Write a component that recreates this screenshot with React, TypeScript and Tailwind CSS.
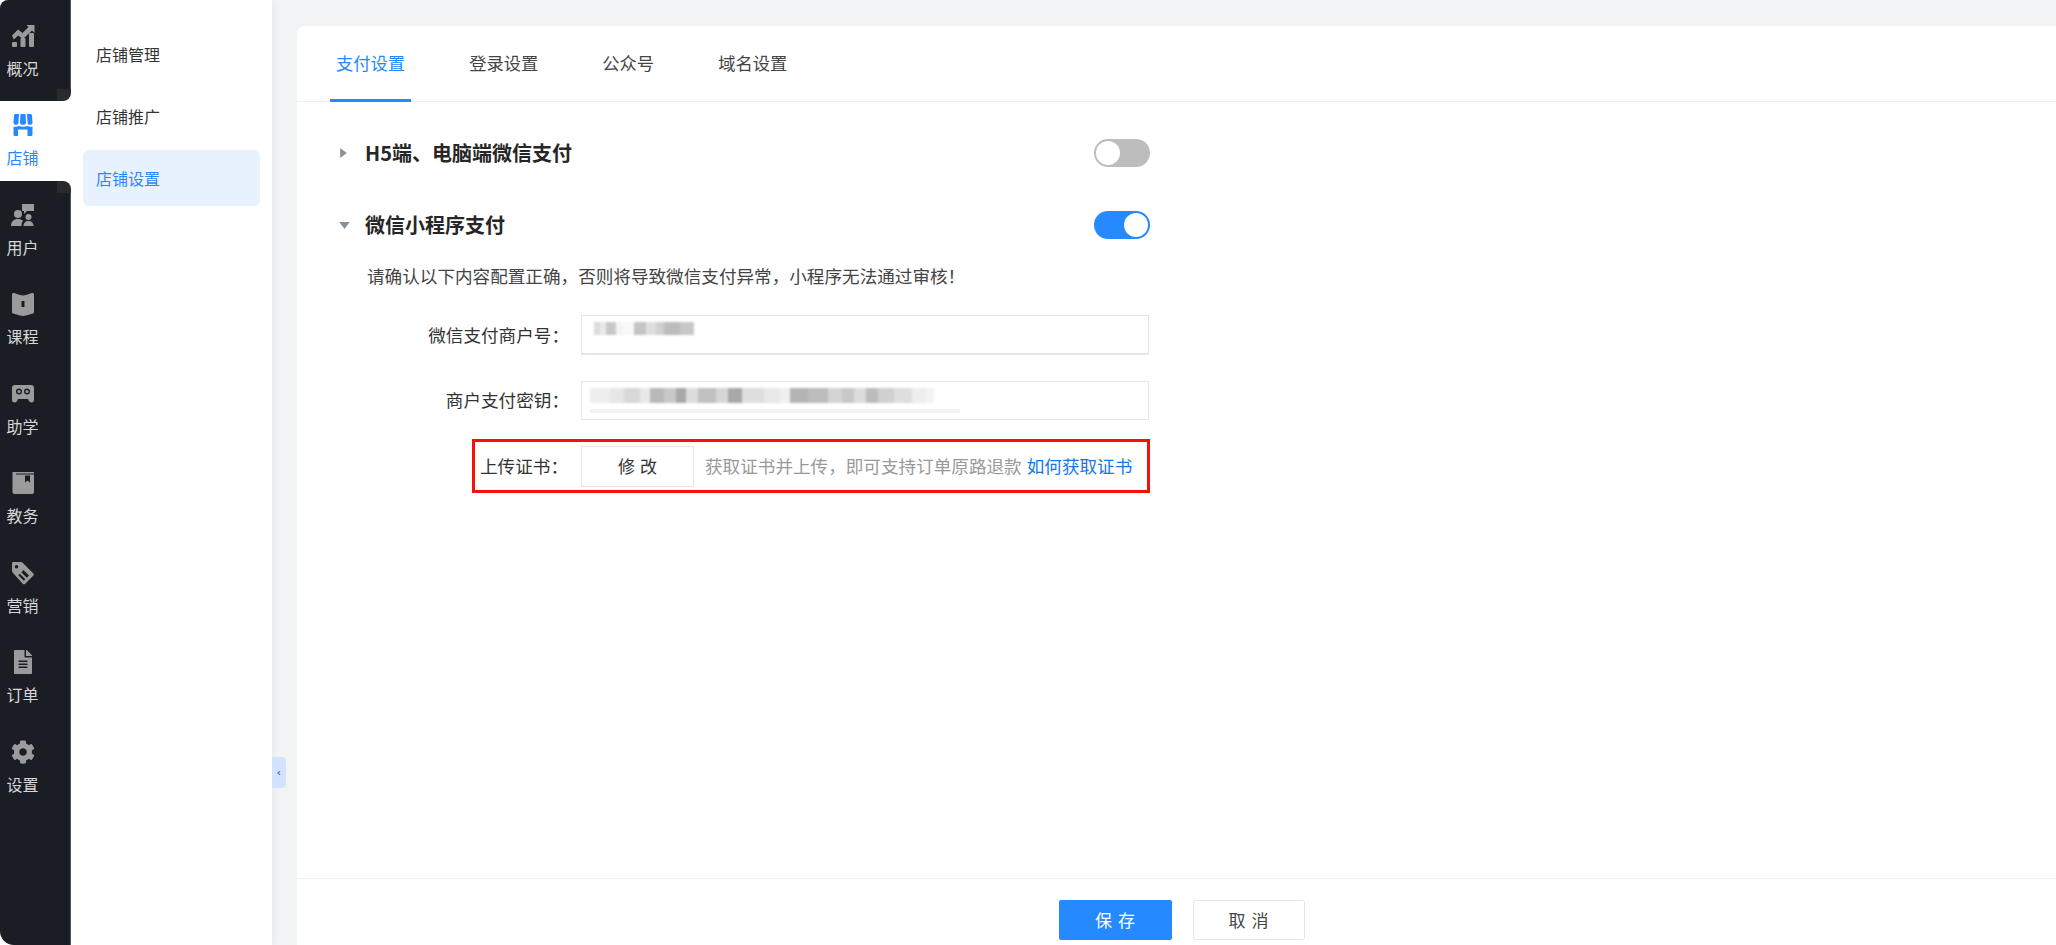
import React from 'react';
import { FaCog, FaFileAlt } from 'react-icons/fa';

const ChartIcon = () => (
  <svg viewBox="0 0 24 24" className="w-6 h-6 fill-current">
    <rect x="1" y="18" width="5" height="5" rx="1" />
    <rect x="9.5" y="14" width="5" height="9" rx="1" />
    <rect x="18" y="9" width="5" height="14" rx="1" />
    <path d="M1 11.500l6-6 4.500 3.500L17.500 3l-2-2H23.500v8l-2.500-2.500-9 8.500L7.200 11.500 2.800 15.500z" />
  </svg>
);

const StoreIcon = () => (
  <svg viewBox="0 0 24 24" className="w-6 h-6 fill-current">
    <path d="M4.500 1h3.500L7.500 9.500c0 1.400-1 2.300-2.500 2.300S2.500 10.900 2.500 9.500L3 2.500C3.100 1.600 3.700 1 4.500 1z" />
    <path d="M9.500 1h5L15 9.500c0 1.400-1.300 2.300-3 2.300S9 10.900 9 9.500z" />
    <path d="M16 1h3.500c.8 0 1.400.6 1.500 1.500l.5 7c0 1.400-1 2.300-2.500 2.300s-2.500-.9-2.500-2.300z" />
    <path d="M2.500 13.500c1.800.5 3.800.3 5-.5 2.500 1.100 6.500 1.100 9 0 1.200.8 3.200 1 5 .5V21.500c0 1-.7 1.500-1.500 1.500h-3.500v-5.500c0-.6-.4-1-1-1H8c-.6 0-1 .4-1 1V23H4c-.8 0-1.500-.5-1.500-1.500z" />
  </svg>
);

const UserIcon = () => (
  <svg viewBox="0 0 24 24" className="w-6 h-6 fill-current">
    <circle cx="7" cy="11" r="4" />
    <path d="M0 23c0-4.500 3-7 7-7 2 0 3.700.6 5 1.800-1 1-1.500 2.800-1.500 5.200z" />
    <circle cx="17.500" cy="14" r="3" />
    <path d="M12.500 23c0-3 2-5 5-5s5 2 5 5z" />
    <path d="M11 1h12v7H16l-3 3V8h-2z" />
  </svg>
);

const BookIcon = () => (
  <svg viewBox="0 0 24 24" className="w-6 h-6 fill-current">
    <path fillRule="evenodd" d="M1 2.500C1 1.500 2 .8 3 1.100l6 1.900c2 .6 4 .6 6 0l6-1.900c1-.3 2 .4 2 1.400V20c0 .8-.5 1.400-1.200 1.600L15 23.500c-2 .6-4 .6-6 0l-6.800-1.900C1.500 21.400 1 20.800 1 20zM10.500 9v6h3V9z" />
  </svg>
);

const GameIcon = () => (
  <svg viewBox="0 0 24 24" className="w-6 h-6 fill-current">
    <path fillRule="evenodd" d="M4 3h16c2 0 3 1.200 3 3v12c0 1.500-1 2.500-2.500 2.500S18 19.500 17.500 18l-.5-1H7l-.5 1C6 19.500 5 20.500 3.500 20.500S1 19.500 1 18V6c0-1.800 1-3 3-3zM8 6.500a3 3 0 100 6 3 3 0 000-6zm8 0a3 3 0 100 6 3 3 0 000-6z" />
    <circle cx="16" cy="9.500" r="1.500" />
    <circle cx="8" cy="9.500" r="1.500" />
  </svg>
);

const BoxIcon = () => (
  <svg viewBox="0 0 24 24" className="w-6 h-6 fill-current">
    <path fillRule="evenodd" d="M1.500 1H23v20c0 1.200-.8 2-2 2H3.500c-1.200 0-2-.8-2-2zM5 3.500h18V2.500H5zM14 4.500v7l2.500-2 2.500 2v-7z" />
  </svg>
);

const TagIcon = () => (
  <svg viewBox="0 0 24 24" className="w-6 h-6 fill-current">
    <path fillRule="evenodd" d="M2.500 1h7.500c.6 0 1 .2 1.400.6l11 10.900c.6.600.6 1.400 0 2l-8.400 8.400c-.6.600-1.400.6-2 0L1.600 11.500C1.200 11 1 10.600 1 10V2.500C1 1.600 1.600 1 2.500 1zM5.500 4a1.800 1.800 0 100 3.600 1.800 1.800 0 000-3.600zM12.500 9l-2.200 2.200 5.500 5.500 2.200-2.200zM8.800 12.700l-1.500 1.500 5.500 5.500 1.500-1.500z" />
  </svg>
);

const navItems = [
  { label: '概况', icon: <ChartIcon /> },
  { label: '店铺', icon: <StoreIcon />, active: true },
  { label: '用户', icon: <UserIcon /> },
  { label: '课程', icon: <BookIcon /> },
  { label: '助学', icon: <GameIcon /> },
  { label: '教务', icon: <BoxIcon /> },
  { label: '营销', icon: <TagIcon /> },
  { label: '订单', icon: <FaFileAlt className="w-6 h-6" /> },
  { label: '设置', icon: <FaCog className="w-6 h-6" /> },
];

const Sidebar = () => (
  <aside className="w-[71px] shrink-0 bg-[#1a1d23] rounded-tl-lg rounded-bl-[14px] pt-[11px] flex flex-col gap-[9.5px] border-r border-[#55585c]">
    {navItems.map((item) => (
      <div
        key={item.label}
        className={
          item.active
            ? 'relative h-20 -mr-px pr-[26px] bg-white text-[#2589ff] flex flex-col items-center justify-center gap-[9px]'
            : 'h-20 pr-[25px] text-[#9b9b9b] flex flex-col items-center justify-center gap-[9px]'
        }
      >
        {item.active && (
          <>
            <div className="absolute right-0 -top-3 w-[14px] h-3 bg-white">
              <div className="w-full h-full bg-[#2a2b2d] rounded-br-lg" />
            </div>
            <div className="absolute right-0 -bottom-3 w-[14px] h-3 bg-white">
              <div className="w-full h-full bg-[#2a2b2d] rounded-tr-lg" />
            </div>
          </>
        )}
        {item.icon}
        <span className={item.active ? 'text-base leading-[22px]' : 'text-base leading-[22px] text-[#d8d8d8]'}>{item.label}</span>
      </div>
    ))}
  </aside>
);

const SubMenu = () => (
  <nav className="relative w-[201px] shrink-0 bg-white pt-[26px] pl-3 pr-3 flex flex-col gap-[6px] shadow-[2px_0_6px_rgba(0,0,0,0.04)]">
    {['店铺管理', '店铺推广', '店铺设置'].map((name, i) => (
      <div
        key={name}
        className={
          i === 2
            ? 'h-14 rounded-md bg-[#e8f1fe] text-[#2589ff] pl-[13px] flex items-center text-base'
            : 'h-14 text-[#333333] pl-[13px] flex items-center text-base'
        }
      >
        {name}
      </div>
    ))}
    <div className="absolute left-full top-[757px] w-[14px] h-[31px] bg-[#d3e3fd] rounded-r flex items-center justify-center">
      <svg viewBox="0 0 8 8" className="w-[6px] h-[6px] stroke-[#2589ff] fill-none" strokeWidth="1.500">
        <path d="M5.500 1.500L2.500 4l3 2.500" />
      </svg>
    </div>
  </nav>
);

const Toggle = ({ on }: { on?: boolean }) => (
  <div
    className={
      on
        ? 'w-[56px] h-7 rounded-full bg-[#2589ff] p-[2px] flex justify-end'
        : 'w-[56px] h-7 rounded-full bg-[#bdbdbd] p-[2px] flex justify-start'
    }
  >
    <div className="w-6 h-6 rounded-full bg-white" />
  </div>
);

const tabs = ['支付设置', '登录设置', '公众号', '域名设置'];

const idBlocks = [
  'w-[6px] bg-[#dcdcdc]', 'w-[6px] bg-[#e8e8e8]', 'w-[10px] bg-[#c8c8c8]', 'w-[6px] bg-[#f4f4f4]', 'w-[12px] bg-[#f8f8f8]',
  'w-[12px] bg-[#c4c4c4]', 'w-[10px] bg-[#dedede]', 'w-[8px] bg-[#d0d0d0]', 'w-[16px] bg-[#bcbcbc]',
  'w-[14px] bg-[#c8c8c8]',
];

const secretBlocks = [
  'w-[20px] bg-[#eeeeee]', 'w-[14px] bg-[#e6e6e6]', 'w-[16px] bg-[#d8d8d8]', 'w-[10px] bg-[#e8e8e8]',
  'w-[14px] bg-[#b8b8b8]', 'w-[12px] bg-[#c8c8c8]', 'w-[10px] bg-[#a8a8a8]', 'w-[12px] bg-[#dcdcdc]',
  'w-[18px] bg-[#c0c0c0]', 'w-[12px] bg-[#d6d6d6]', 'w-[14px] bg-[#a8a8a8]', 'w-[22px] bg-[#dedede]',
  'w-[16px] bg-[#e8e8e8]', 'w-[10px] bg-[#f0f0f0]', 'w-[18px] bg-[#b4b4b4]', 'w-[20px] bg-[#bcbcbc]',
  'w-[14px] bg-[#d4d4d4]', 'w-[12px] bg-[#c8c8c8]', 'w-[12px] bg-[#dcdcdc]', 'w-[12px] bg-[#bcbcbc]',
  'w-[16px] bg-[#d0d0d0]', 'w-[18px] bg-[#dedede]', 'w-[14px] bg-[#eeeeee]', 'w-[8px] bg-[#f4f4f4]',
];

const Content = () => (
  <main className="flex-1 min-w-0 pl-[25px] pt-[26px] bg-[#f2f3f5] flex">
    <div className="flex-1 bg-white rounded-tl-lg flex flex-col">
      <div className="h-[76px] border-b border-[#eeeeee] flex items-end gap-[52px] pl-[33px]">
        {tabs.map((t, i) => (
          <div
            key={t}
            className={
              i === 0
                ? 'h-[76px] px-[6px] -mb-px flex items-center text-[17.300px] text-[#2589ff] border-b-[3px] border-[#2589ff]'
                : 'h-[76px] px-[6px] -mb-px flex items-center text-[17.300px] text-[#444444] border-b-[3px] border-transparent'
            }
          >
            {t}
          </div>
        ))}
      </div>

      <div className="flex-1 pl-[43px]">
        <div className="w-[810px] mt-[37px] h-7 flex items-center">
          <svg viewBox="0 0 8 12" className="w-[7px] h-[10px] fill-[#8a9099] mr-[18px]">
            <path d="M0 0l8 6-8 6z" />
          </svg>
          <span className="flex-1 text-[20px] font-semibold text-[#262626]">H5端、电脑端微信支付</span>
          <Toggle />
        </div>

        <div className="w-[810px] mt-[44px] h-7 flex items-center">
          <svg viewBox="0 0 12 8" className="w-[11px] h-[7px] fill-[#8a9099] -ml-px mr-[15px]">
            <path d="M0 0h12L6 8z" />
          </svg>
          <span className="flex-1 text-[20px] font-semibold text-[#262626]">微信小程序支付</span>
          <Toggle on />
        </div>

        <div className="mt-[25px] pl-[27px] text-[17.600px] leading-6 text-[#444444]">
          请确认以下内容配置正确，否则将导致微信支付异常，小程序无法通过审核！
        </div>

        <div className="mt-[27px] flex items-center">
          <label className="w-[229px] text-right text-[17.600px] text-[#333333]">微信支付商户号：</label>
          <div className="ml-[12px] w-[568px] h-10 border border-[#e5e6eb] border-b-2 pl-3 pt-[6px]">
            <div className="flex h-[13px] blur-[1px]">
              {idBlocks.map((c, i) => (
                <span key={i} className={c} />
              ))}
            </div>
          </div>
        </div>

        <div className="mt-[26px] flex items-center">
          <label className="w-[229px] text-right text-[17.600px] text-[#333333]">商户支付密钥：</label>
          <div className="ml-[12px] w-[568px] h-[39px] border border-[#e5e6eb] pl-[8px] pt-[6px]">
            <div className="flex h-[15px] blur-[1px]">
              {secretBlocks.map((c, i) => (
                <span key={i} className={c} />
              ))}
            </div>
            <div className="mt-[6px] w-[370px] h-1 bg-[#f2f2f2]" />
          </div>
        </div>

        <div className="mt-[19px] ml-[132px] w-[678px] h-[54px] border-[3px] border-[#f5100c] flex items-center">
          <label className="w-[93px] text-right text-[17.600px] text-[#333333]">上传证书：</label>
          <div className="ml-[13px] w-[113px] h-[41px] pl-[5px] border border-[#e5e6eb] flex items-center justify-center text-[17px] tracking-[5px] text-[#333333]">
            修改
          </div>
          <span className="ml-[11px] text-[17.600px] text-[#999999]">获取证书并上传，即可支持订单原路退款</span>
          <span className="ml-[5px] text-[17.600px] text-[#1677e8]">如何获取证书</span>
        </div>
      </div>

      <div className="h-[67px] border-t border-[#eeeeee] pt-[21px] pl-[10px] flex justify-center gap-[21px] bg-white">
        <button className="w-[113px] h-10 pl-[6px] rounded-[2px] bg-[#2589ff] text-white text-[17px] tracking-[6px]">保存</button>
        <button className="w-[112px] h-10 pl-[6px] rounded-[2px] bg-white border border-[#e5e6eb] text-[#444444] text-[17px] tracking-[6px]">取消</button>
      </div>
    </div>
  </main>
);

export default function App() {
  return (
    <div className="w-full h-[945px] flex overflow-hidden bg-white font-['Noto_Sans_CJK_SC','Noto_Sans',sans-serif]">
      <Sidebar />
      <SubMenu />
      <Content />
    </div>
  );
}
